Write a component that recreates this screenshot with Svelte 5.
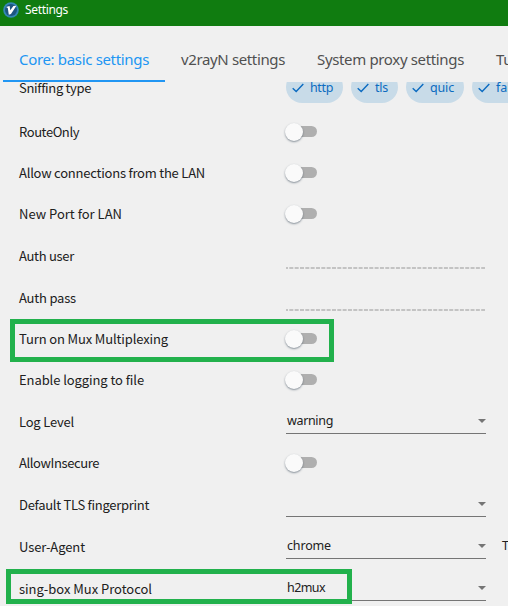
<script>
  const tabs = [
    { text: 'Core: basic settings', width: 130, active: true },
    { text: 'v2rayN settings', width: 104 },
    { text: 'System proxy settings', width: 147 },
    { text: 'Tun mode settings', width: 125 }
  ];
  const chips = [
    { text: 'http', width: 23 },
    { text: 'tls', width: 13 },
    { text: 'quic', width: 24 },
    { text: 'fakedns', width: 46 }
  ];
  const rows = [
    { label: 'RouteOnly', width: 60, kind: 'toggle' },
    { label: 'Allow connections from the LAN', width: 186, kind: 'toggle' },
    { label: 'New Port for LAN', width: 103, kind: 'toggle' },
    { label: 'Auth user', width: 55, kind: 'input' },
    { label: 'Auth pass', width: 57, kind: 'input' },
    { label: 'Turn on Mux Multiplexing', width: 149, kind: 'toggle' },
    { label: 'Enable logging to file', width: 125, kind: 'toggle' },
    { label: 'Log Level', width: 55, kind: 'select', value: 'warning', valueWidth: 46 },
    { label: 'AllowInsecure', width: 80, kind: 'toggle' },
    { label: 'Default TLS fingerprint', width: 130, kind: 'select', value: '' },
    { label: 'User-Agent', width: 66, kind: 'select', value: 'chrome', valueWidth: 44, note: 'This' },
    { label: 'sing-box Mux Protocol', width: 133, kind: 'select', value: 'h2mux', valueWidth: 38 }
  ];

  // Spreads the letters so that a text takes up its intended width.
  function fit(node, width) {
    if (!width) return;
    const natural = node.getBoundingClientRect().width;
    node.style.letterSpacing = `${(width - natural) / node.textContent.length}px`;
  }
</script>

<div class="window">
  <header>
    <svg class="logo" width="16" height="16" viewBox="0 0 16 16">
      <circle cx="8" cy="8" r="7.8" fill="#3488b5" />
      <circle cx="8" cy="8" r="6" fill="#1d5580" />
      <path d="M3 4.9 6.6 4 7.3 8.3 10.4 4.1 13.4 3.7 8 12 5.8 12.8 4.8 6Z" fill="#fff" />
    </svg>
    <span use:fit={43}>Settings</span>
  </header>
  <nav>
    {#each tabs as tab}
      <div class="tab" class:active={tab.active}><span use:fit={tab.width}>{tab.text}</span></div>
    {/each}
  </nav>
  <main>
    <div class="row sniffing">
      <div class="label"><span use:fit={72}>Sniffing type</span></div>
      <div class="chips">
        {#each chips as chip}
          <div class="chip">
            <svg width="12" height="10" viewBox="0 0 12 10"><path d="M.7 5.2 4.2 8.6 11.3 1" fill="none" stroke="#0c6bc0" stroke-width="1.4" /></svg>
            <span use:fit={chip.width}>{chip.text}</span>
          </div>
        {/each}
      </div>
    </div>
    {#each rows as row}
      <div class="row {row.kind}">
        <div class="label"><span use:fit={row.width}>{row.label}</span></div>
        {#if row.kind === 'toggle'}
          <div class="switch"><i></i></div>
        {:else if row.kind === 'input'}
          <svg class="dashes" width="200" height="2"><path d="M0 1H199" stroke="#c3c3c3" stroke-width="2" stroke-dasharray="4 1.33" stroke-dashoffset="2" /></svg>
        {:else}
          <div class="field">
            <span use:fit={row.valueWidth}>{row.value}</span>
            <svg width="8" height="4" viewBox="0 0 8 4"><path d="M0 0H8L4 4Z" fill="#757575" /></svg>
          </div>
          {#if row.note}<div class="note">{row.note}</div>{/if}
        {/if}
      </div>
    {/each}
  </main>
  <div class="mark mux"></div>
  <div class="mark protocol"></div>
</div>

<style>
  .window {
    position: relative;
    width: 508px;
    height: 606px;
    overflow: hidden;
    display: flex;
    flex-direction: column;
    background: #f0f0f0;
    color: #202020;
    font: 13px/20px "Noto Sans CJK SC", "Noto Sans", sans-serif;
    white-space: nowrap;
  }
  span { display: inline-block; }
  header {
    flex: none;
    height: 26px;
    box-sizing: border-box;
    display: flex;
    align-items: center;
    gap: 6px;
    padding: 0 0 6px 3px;
    background: #107c10;
    color: #fff;
    font: 12px/18px "Noto Sans", sans-serif;
  }
  nav {
    flex: none;
    height: 56px;
    display: flex;
    padding-left: 3px;
    font: 15px/22px "Noto Sans", sans-serif;
    color: #505050;
  }
  .tab {
    flex: none;
    box-sizing: border-box;
    padding: 22px 16px 0;
    border-bottom: 2px solid transparent;
  }
  .active { color: #2196f3; border-color: #2196f3; }
  main { flex: 1; min-height: 0; overflow: hidden; }
  .row {
    display: flex;
    align-items: center;
    height: 42px;
    padding-left: 19px;
  }
  .toggle { height: 41px; }
  .label { flex: none; width: 267px; }
  .input .label, .select .label { padding-top: 1px; }
  .sniffing { height: 32px; margin-top: -11px; padding-bottom: 8px; }
  .sniffing .label { padding-top: 2px; }
  .chips {
    flex: none;
    display: flex;
    gap: 8px;
    font: 12.5px/20px "Noto Sans", sans-serif;
    color: #0c6bc0;
  }
  .chip {
    display: flex;
    align-items: center;
    gap: 6px;
    height: 32px;
    padding: 1px 10px 0 6px;
    box-sizing: border-box;
    border-radius: 16px;
    background: #c8dbe8;
  }
  .switch {
    width: 27px;
    height: 11px;
    margin-left: 4px;
    border-radius: 6px;
    background: #afafaf;
    display: flex;
    align-items: center;
  }
  .switch i {
    flex: none;
    width: 18px;
    height: 18px;
    margin-left: -4.7px;
    border-radius: 50%;
    background: #fafafa;
    box-shadow: 0 1px 2px rgba(60, 75, 90, .6);
  }
  .dashes { margin-top: 26px; }
  .field {
    flex: none;
    width: 200px;
    height: 26px;
    margin-top: -1px;
    box-sizing: border-box;
    border-bottom: 1px solid #757575;
    display: flex;
    align-items: center;
    justify-content: space-between;
    padding: 2px 0 0 1px;
    font: 12.5px/20px "Noto Sans", sans-serif;
  }
  .note { margin-left: 16px; font: 12.5px/20px "Noto Sans", sans-serif; }
  .mark {
    position: absolute;
    box-sizing: border-box;
    border: 5px solid #22b14c;
  }
  .mux { left: 10px; top: 319px; width: 324px; height: 43px; }
  .protocol { left: 6px; top: 569px; width: 346px; height: 35px; }
</style>
